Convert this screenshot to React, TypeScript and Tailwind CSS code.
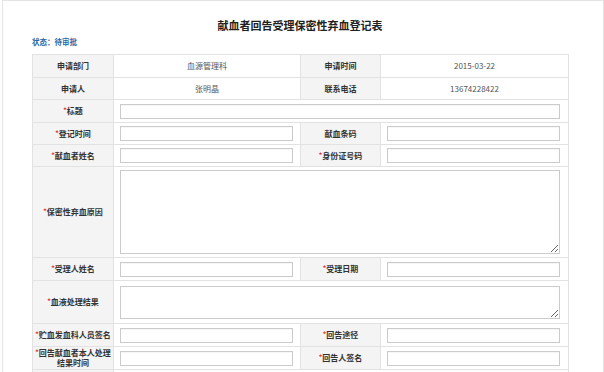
import React from 'react';

const font = { fontFamily: '"Noto Sans CJK SC", "Noto Sans", sans-serif' };

const Star = () => <span className="text-[#e0322f] text-[7px] align-top leading-[8px]">*</span>;

const Label = ({ text, req = false, wrap = false }: { text?: React.ReactNode; req?: boolean; wrap?: boolean }) => (
  <td
    className={`bg-[#f4f4f4] border border-[#e2e2e2] px-[1px] text-center font-bold text-[8px] text-[#333] ${
      wrap ? 'leading-[10px]' : 'leading-[10px] whitespace-nowrap'
    }`}
  >
    {req && <Star />}
    {text}
  </td>
);

const Value = ({ text }: { text: string }) => (
  <td className="border border-[#e2e2e2] text-center text-[8px] text-[#555] leading-[10px]">{text}</td>
);

const Input = ({ colSpan = 1, right = 'pr-[7px]' }: { colSpan?: number; right?: string }) => (
  <td colSpan={colSpan} className={`border border-[#e2e2e2] pl-[6px] ${right}`}>
    <input className="block w-full h-[15px] border border-[#cbcbcb] bg-white outline-none shadow-[inset_0_1px_1px_rgba(0,0,0,0.04)]" />
  </td>
);

const Area = ({ h }: { h: string }) => (
  <td colSpan={3} className="border border-[#e2e2e2] pl-[6px] pr-[8px]">
    <textarea className={`block w-full ${h} border border-[#cbcbcb] bg-white outline-none`} />
  </td>
);

export default function App() {
  return (
    <div className="min-h-screen bg-white pl-[2px]" style={font}>
      <div className="w-[602px] h-[372px] border-l border-t border-r border-[#e4e4e4] overflow-hidden">
        <div className="ml-[29px] w-[536px]">
          <h1 className="pt-[17px] h-[31px] text-center text-[11px] font-bold leading-[14px] text-[#222]">
            献血者回告受理保密性弃血登记表
          </h1>
          <div className="mt-[5px] h-[10px] text-[7.5px] leading-[10px] font-bold text-[#2b6aa6]">状态：待审批</div>
          <table className="mt-[7px] w-[536px] table-fixed border-collapse border border-[#dcdcdc]">
            <colgroup>
              <col className="w-[81px]" />
              <col className="w-[187px]" />
              <col className="w-[80px]" />
              <col className="w-[188px]" />
            </colgroup>
            <tbody>
              <tr className="h-[23px]">
                <Label text="申请部门" />
                <Value text="血源管理科" />
                <Label text="申请时间" />
                <Value text="2015-03-22" />
              </tr>
              <tr className="h-[22px]">
                <Label text="申请人" />
                <Value text="张明晶" />
                <Label text="联系电话" />
                <Value text="13674228422" />
              </tr>
              <tr className="h-[23px]">
                <Label text="标题" req />
                <Input colSpan={3} right="pr-[8px]" />
              </tr>
              <tr className="h-[22px]">
                <Label text="登记时间" req />
                <Input />
                <Label text="献血条码" />
                <Input right="pr-[8px]" />
              </tr>
              <tr className="h-[22px]">
                <Label text="献血者姓名" req />
                <Input />
                <Label text="身份证号码" req />
                <Input right="pr-[8px]" />
              </tr>
              <tr className="h-[91px]">
                <Label text="保密性弃血原因" req />
                <Area h="h-[84px]" />
              </tr>
              <tr className="h-[23px]">
                <Label text="受理人姓名" req />
                <Input />
                <Label text="受理日期" req />
                <Input right="pr-[8px]" />
              </tr>
              <tr className="h-[43px]">
                <Label text="血液处理结果" req />
                <Area h="h-[33px]" />
              </tr>
              <tr className="h-[23px]">
                <Label text="贮血发血科人员签名" req />
                <Input />
                <Label text="回告途径" req />
                <Input right="pr-[8px]" />
              </tr>
              <tr className="h-[23px]">
                <Label text={<>回告献血者本人处理<br />结果时间</>} req wrap />
                <Input />
                <Label text="回告人签名" req />
                <Input right="pr-[8px]" />
              </tr>
              <tr className="h-[23px]">
                <Label />
                <Input colSpan={3} right="pr-[8px]" />
              </tr>
            </tbody>
          </table>
        </div>
      </div>
    </div>
  );
}
